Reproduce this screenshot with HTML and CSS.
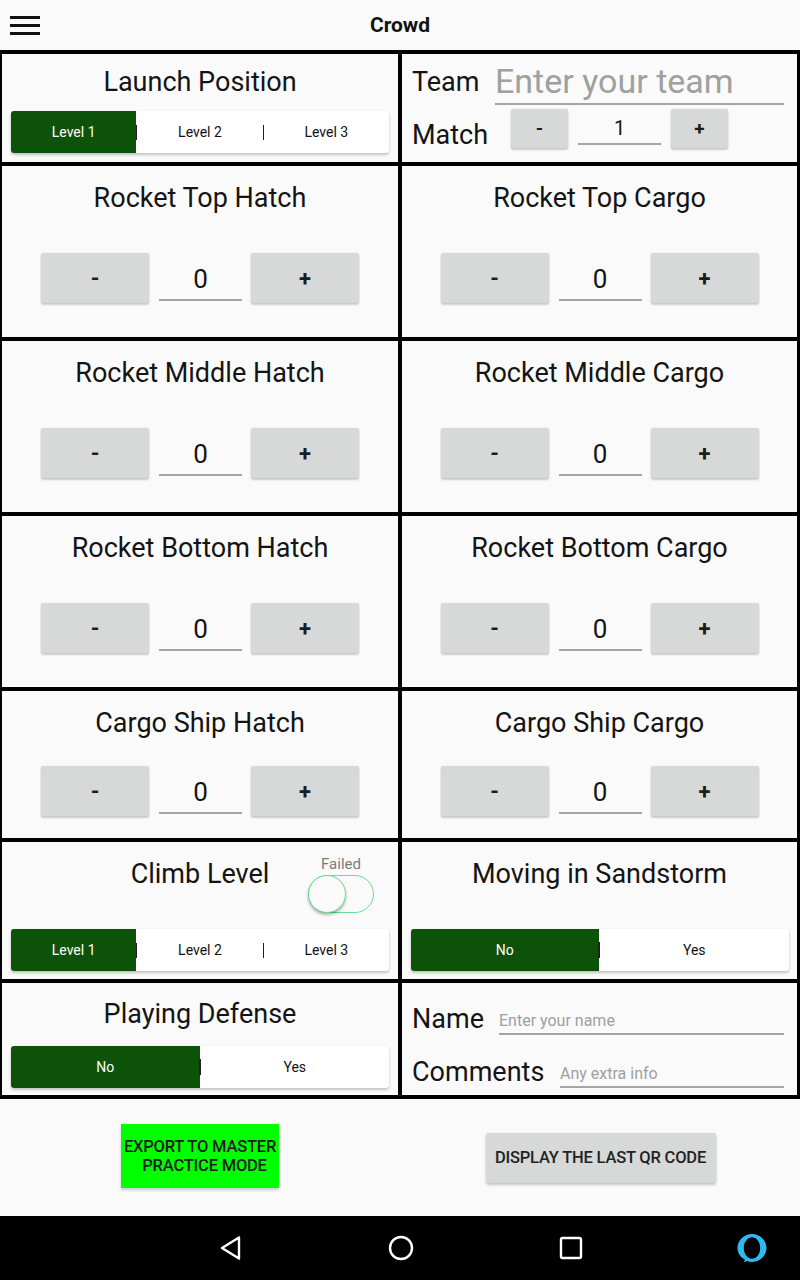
FILE: index.html
```html
<!DOCTYPE html>
<html lang="en">
<head>
<meta charset="utf-8">
<title>Crowd</title>
<link rel="stylesheet" href="styles.css">
</head>
<body>
<div class="screen">
  <header class="appbar">
    <div class="appbar-left">
      <svg class="hamburger" width="30" height="19" viewBox="0 0 30 19" aria-hidden="true">
        <rect x="0" y="0" width="30" height="3" fill="#111"/>
        <rect x="0" y="8" width="30" height="3" fill="#111"/>
        <rect x="0" y="16" width="30" height="3" fill="#111"/>
      </svg>
    </div>
    <h1 class="appbar-title">Crowd</h1>
    <div></div>
  </header>

  <main class="board">
    <section class="cell cell-launch">
      <div class="title">Launch Position</div>
      <div class="segmented">
        <div class="seg seg-on">Level 1</div>
        <span class="sep"></span>
        <div class="seg">Level 2</div>
        <span class="sep"></span>
        <div class="seg">Level 3</div>
      </div>
    </section>

    <section class="cell cell-team">
      <div class="team-row">
        <span class="label">Team</span>
        <span class="field field-team">Enter your team</span>
      </div>
      <div class="match-row">
        <span class="label label-match">Match</span>
        <span class="btn btn-small">-</span>
        <span class="value value-small">1</span>
        <span class="btn btn-small">+</span>
      </div>
    </section>

    <section class="cell counter">
      <div class="title">Rocket Top Hatch</div>
      <div class="stepper"><span class="btn">-</span><span class="value">0</span><span class="btn">+</span></div>
    </section>
    <section class="cell counter">
      <div class="title">Rocket Top Cargo</div>
      <div class="stepper"><span class="btn">-</span><span class="value">0</span><span class="btn">+</span></div>
    </section>

    <section class="cell counter">
      <div class="title">Rocket Middle Hatch</div>
      <div class="stepper"><span class="btn">-</span><span class="value">0</span><span class="btn">+</span></div>
    </section>
    <section class="cell counter">
      <div class="title">Rocket Middle Cargo</div>
      <div class="stepper"><span class="btn">-</span><span class="value">0</span><span class="btn">+</span></div>
    </section>

    <section class="cell counter">
      <div class="title">Rocket Bottom Hatch</div>
      <div class="stepper"><span class="btn">-</span><span class="value">0</span><span class="btn">+</span></div>
    </section>
    <section class="cell counter">
      <div class="title">Rocket Bottom Cargo</div>
      <div class="stepper"><span class="btn">-</span><span class="value">0</span><span class="btn">+</span></div>
    </section>

    <section class="cell counter">
      <div class="title">Cargo Ship Hatch</div>
      <div class="stepper"><span class="btn">-</span><span class="value">0</span><span class="btn">+</span></div>
    </section>
    <section class="cell counter">
      <div class="title">Cargo Ship Cargo</div>
      <div class="stepper"><span class="btn">-</span><span class="value">0</span><span class="btn">+</span></div>
    </section>

    <section class="cell cell-climb">
      <div class="climb-head">
        <div></div>
        <div class="title title-climb">Climb Level</div>
        <div class="failed">
          <span class="failed-label">Failed</span>
          <span class="switch"><span class="knob"></span></span>
        </div>
      </div>
      <div class="segmented">
        <div class="seg seg-on">Level 1</div>
        <span class="sep"></span>
        <div class="seg">Level 2</div>
        <span class="sep"></span>
        <div class="seg">Level 3</div>
      </div>
    </section>

    <section class="cell cell-sand">
      <div class="title">Moving in Sandstorm</div>
      <div class="segmented">
        <div class="seg seg-on">No</div>
        <span class="sep sep-strong"></span>
        <div class="seg">Yes</div>
      </div>
    </section>

    <section class="cell cell-defense">
      <div class="title">Playing Defense</div>
      <div class="segmented">
        <div class="seg seg-on">No</div>
        <span class="sep sep-strong"></span>
        <div class="seg">Yes</div>
      </div>
    </section>

    <section class="cell cell-notes">
      <div class="note-row">
        <span class="label label-name">Name</span>
        <span class="field field-small">Enter your name</span>
      </div>
      <div class="note-row">
        <span class="label label-comments">Comments</span>
        <span class="field field-small">Any extra info</span>
      </div>
    </section>
  </main>

  <footer class="actions">
    <div class="action-slot">
      <div class="export-btn"><span>EXPORT TO MASTER</span><span class="export-line2">PRACTICE MODE</span></div>
    </div>
    <div class="action-slot">
      <div class="qr-btn">DISPLAY THE LAST QR CODE</div>
    </div>
  </footer>

  <nav class="navbar">
    <span class="nav-slot">
      <svg width="24" height="26" viewBox="0 0 24 26" aria-hidden="true">
        <path d="M20 2.5 L3 13 L20 23.5 Z" fill="none" stroke="#fff" stroke-width="2.4" stroke-linejoin="round"/>
      </svg>
    </span>
    <span class="nav-slot">
      <svg width="28" height="28" viewBox="0 0 28 28" aria-hidden="true">
        <circle cx="14" cy="14" r="11" fill="none" stroke="#fff" stroke-width="2.4"/>
      </svg>
    </span>
    <span class="nav-slot">
      <svg width="26" height="26" viewBox="0 0 26 26" aria-hidden="true">
        <rect x="3" y="3" width="20" height="20" rx="1.5" fill="none" stroke="#fff" stroke-width="2.4"/>
      </svg>
    </span>
    <span class="nav-slot nav-assist">
      <svg width="32" height="32" viewBox="0 0 32 32" aria-hidden="true">
        <path fill="#2dbbef" fill-rule="evenodd" d="M16 2 C23.8 2 30.5 8.3 30.5 16 C30.5 23.7 23.8 30 16 30 C14.2 30 12.5 29.7 11 29.1 L8.2 30.2 L8.8 27.6 C4.5 25.2 1.5 20.9 1.5 16 C1.5 8.3 8.2 2 16 2 Z M16 5.2 C11.6 5.2 7.8 10 7.8 16 C7.8 22 11.6 26.8 16 26.8 C20.4 26.8 24.2 22 24.2 16 C24.2 10 20.4 5.2 16 5.2 Z"/>
      </svg>
    </span>
  </nav>
</div>
</body>
</html>
```

FILE: styles.css
```css
* { box-sizing: border-box; }

html, body {
  margin: 0;
  padding: 0;
  background: #fafafa;
}

body {
  font-family: Roboto, "Liberation Sans", Arial, sans-serif;
  color: #1a1a1a;
}

.screen {
  width: 800px;
  height: 1280px;
  display: flex;
  flex-direction: column;
  background: #fafafa;
}

/* ---------- app bar ---------- */
.appbar {
  height: 50px;
  display: grid;
  grid-template-columns: 1fr auto 1fr;
  align-items: center;
  background: #fafafa;
}

.appbar-left {
  padding-left: 10px;
  display: flex;
  align-items: center;
}

.hamburger { display: block; }

.appbar-title {
  margin: 0;
  font-size: 21px;
  font-weight: 700;
  line-height: 24px;
  color: #111;
}

/* ---------- board grid ---------- */
.board {
  display: grid;
  grid-template-columns: 396px 395px;
  grid-template-rows: 108px 171px 171px 171px 147px 137px 112px;
  gap: 4px;
  padding: 4px 3px 4px 2px;
  background: #000;
}

.cell {
  background: #fafafa;
  display: flex;
  flex-direction: column;
  min-width: 0;
}

.title {
  font-size: 27px;
  line-height: 30px;
  text-align: center;
  color: #141414;
  white-space: nowrap;
}

.label {
  font-size: 27px;
  line-height: 30px;
  color: #141414;
  white-space: nowrap;
}

/* counters */
.counter .title {
  padding-top: 17px;
  padding-bottom: 6px;
}

.stepper {
  flex: 1;
  display: flex;
  align-items: center;
  justify-content: center;
}

.btn {
  width: 108px;
  height: 50px;
  background: #d7d8d8;
  border-radius: 2px;
  box-shadow: 0 2px 2px rgba(0, 0, 0, 0.18), 0 0 2px rgba(0, 0, 0, 0.1);
  display: flex;
  align-items: center;
  justify-content: center;
  font-size: 22px;
  font-weight: 700;
  color: #1c1c1c;
}

.value {
  width: 83px;
  margin: 0 9px 0 10px;
  font-size: 26px;
  text-align: center;
  color: #141414;
}

.stepper .value {
  height: 50px;
  padding-top: 6px;
  line-height: 40px;
  background: linear-gradient(#a4a4a4, #a4a4a4) left 0 bottom 2px / 100% 2px no-repeat;
}

/* segmented */
.segmented {
  width: 378px;
  height: 42px;
  margin: 0 auto;
  display: flex;
  align-items: center;
  background: #fff;
  border-radius: 3px;
  overflow: hidden;
  box-shadow: 0 2px 3px rgba(0, 0, 0, 0.22), 0 0 1px rgba(0, 0, 0, 0.12);
}

.seg {
  flex: 1;
  height: 100%;
  display: flex;
  align-items: center;
  justify-content: center;
  font-size: 14px;
  color: #111;
}

.seg-on {
  background: #0c5208;
  color: #fff;
}

.sep {
  width: 1px;
  height: 15px;
  background: #222;
  flex: none;
}

.sep-strong {
  width: 2px;
  height: 16px;
  margin-left: -1px;
}

/* launch position */
.cell-launch .title { padding-top: 13px; }
.cell-launch .segmented { margin-top: 14px; }

/* team / match */
.cell-team {
  padding: 0 13px 0 10px;
}

.team-row {
  display: flex;
  align-items: flex-start;
}

.team-row .label {
  width: 83px;
  padding-top: 13px;
}

.field {
  flex: 1;
  color: #a0a0a0;
  border-bottom: 2px solid #a4a4a4;
  white-space: nowrap;
  overflow: hidden;
}

.field-team {
  font-size: 34px;
  line-height: 36px;
  padding-top: 9px;
  padding-bottom: 4px;
}

.match-row {
  display: flex;
  align-items: flex-start;
  margin-top: 4px;
}

.label-match {
  width: 99px;
  margin-top: 11px;
}

.btn-small {
  width: 57px;
  height: 39px;
  font-size: 19px;
}

.value-small {
  height: 36px;
  margin: 0 10px;
  padding-top: 9px;
  line-height: 20px;
  font-size: 20px;
  border-bottom: 2px solid #a4a4a4;
}

/* climb */
.climb-head {
  display: grid;
  grid-template-columns: 1fr auto 1fr;
  padding-top: 13px;
}

.title-climb { margin-top: 4px; }

.failed {
  justify-self: end;
  margin-right: 24px;
  display: flex;
  flex-direction: column;
  align-items: center;
}

.failed-label {
  font-size: 15px;
  line-height: 18px;
  color: #7a7a7a;
}

.switch {
  margin-top: 2px;
  width: 66px;
  height: 38px;
  border: 1.5px solid #66e093;
  border-radius: 19px;
  display: flex;
  align-items: center;
}

.knob {
  width: 38px;
  height: 38px;
  margin-left: -1.5px;
  border-radius: 50%;
  border: 1.5px solid #66e093;
  background: #fafafa;
  box-shadow: 0 2px 3px rgba(0, 0, 0, 0.3);
}

.cell-climb .segmented { margin-top: 16px; }

/* sandstorm */
.cell-sand .title { padding-top: 17px; }
.cell-sand .segmented { margin-top: 40px; }

/* defense */
.cell-defense .title { padding-top: 16px; }
.cell-defense .segmented { margin-top: 17px; }

/* notes */
.cell-notes {
  padding: 20px 13px 0 10px;
  gap: 21px;
}

.note-row {
  display: flex;
  align-items: flex-start;
}

.note-row .label { padding-top: 1px; }

.label-name { width: 87px; }
.label-comments { width: 148px; }

.field-small {
  font-size: 16px;
  line-height: 18px;
  height: 32px;
  padding-top: 9px;
}

/* ---------- actions ---------- */
.actions {
  height: 117px;
  display: grid;
  grid-template-columns: 400px 400px;
  align-items: center;
  background: #fafafa;
}

.action-slot {
  display: flex;
  justify-content: center;
}

.export-btn {
  width: 158px;
  height: 64px;
  margin-top: -3px;
  background: #00ff00;
  box-shadow: 0 2px 3px rgba(0, 0, 0, 0.2);
  display: flex;
  flex-direction: column;
  align-items: center;
  justify-content: center;
  text-align: center;
  font-size: 16.5px;
  line-height: 19px;
  font-weight: 500;
  color: #1b1b1b;
  white-space: nowrap;
  letter-spacing: -0.2px;
}

.export-line2 { padding-left: 9px; }

.qr-btn {
  width: 230px;
  height: 50px;
  margin-left: 1px;
  background: #d7d8d8;
  border-radius: 2px;
  box-shadow: 0 2px 3px rgba(0, 0, 0, 0.2), 0 0 2px rgba(0, 0, 0, 0.08);
  display: flex;
  align-items: center;
  justify-content: center;
  font-size: 16.5px;
  font-weight: 500;
  color: #222;
  white-space: nowrap;
  letter-spacing: -0.2px;
}

/* ---------- nav bar ---------- */
.navbar {
  height: 64px;
  background: #000;
  display: flex;
  align-items: center;
  padding-left: 146px;
}

.nav-slot {
  width: 170px;
  display: flex;
  justify-content: center;
  align-items: center;
}

.nav-slot svg { display: block; }

.nav-assist {
  width: 59px;
  margin-left: 66px;
}
```
